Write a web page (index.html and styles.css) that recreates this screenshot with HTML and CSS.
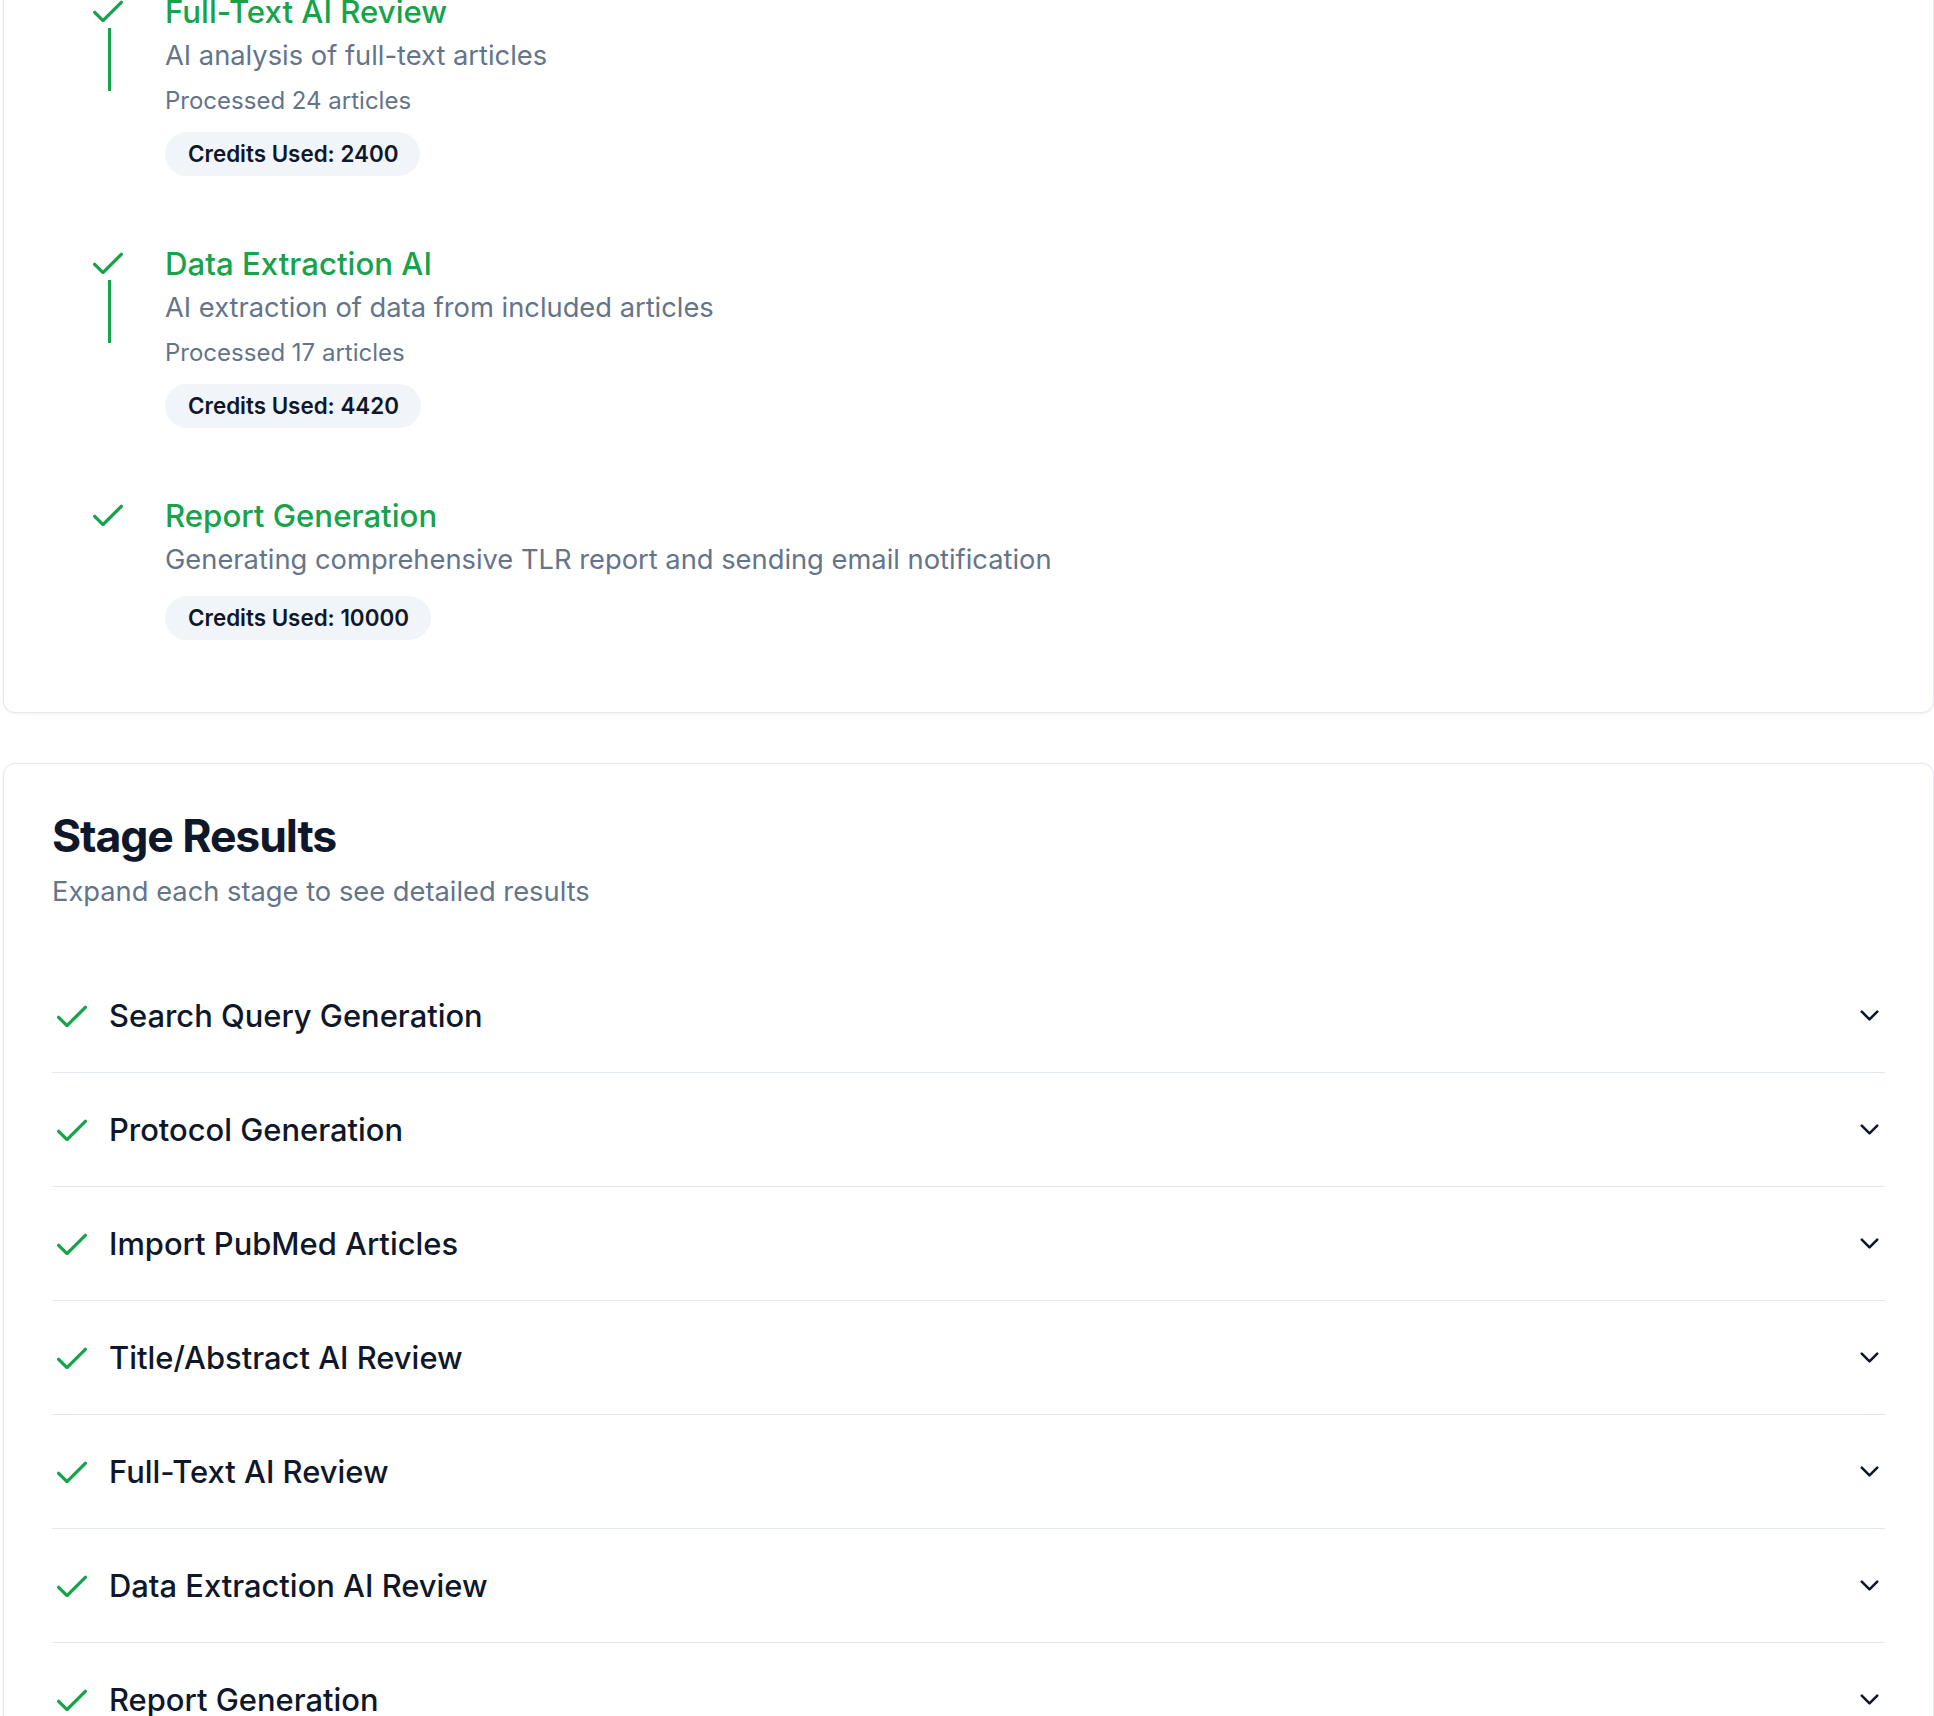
FILE: index.html
```html
<!DOCTYPE html>
<html>
<head>
  <title>Review Progress</title>
  <link rel="stylesheet" href="styles.css">
</head>
<body>
  <main class="page">
    <section class="card timeline-card">
      <div class="stage">
        <div class="stage-marker">
          <svg class="check" viewBox="3 4.6 18 13.2"><path d="M20 6 9 17l-5-5"/></svg>
          <span class="stage-line"></span>
        </div>
        <div class="stage-body">
          <h3 class="stage-title">Full-Text AI Review</h3>
          <p class="stage-desc">AI analysis of full-text articles</p>
          <p class="stage-meta">Processed 24 articles</p>
          <span class="credits">Credits Used: 2400</span>
        </div>
      </div>
      <div class="stage">
        <div class="stage-marker">
          <svg class="check" viewBox="3 4.6 18 13.2"><path d="M20 6 9 17l-5-5"/></svg>
          <span class="stage-line"></span>
        </div>
        <div class="stage-body">
          <h3 class="stage-title">Data Extraction AI</h3>
          <p class="stage-desc">AI extraction of data from included articles</p>
          <p class="stage-meta">Processed 17 articles</p>
          <span class="credits">Credits Used: 4420</span>
        </div>
      </div>
      <div class="stage">
        <div class="stage-marker">
          <svg class="check" viewBox="3 4.6 18 13.2"><path d="M20 6 9 17l-5-5"/></svg>
        </div>
        <div class="stage-body">
          <h3 class="stage-title">Report Generation</h3>
          <p class="stage-desc">Generating comprehensive TLR report and sending email notification</p>
          <span class="credits">Credits Used: 10000</span>
        </div>
      </div>
    </section>

    <section class="card results-card">
      <h2>Stage Results</h2>
      <p class="subtitle">Expand each stage to see detailed results</p>
      <ul class="results">
        <li class="result-row">
          <svg class="check" viewBox="3 4.6 18 13.2"><path d="M20 6 9 17l-5-5"/></svg>
          <span class="result-name">Search Query Generation</span>
          <svg class="chevron" viewBox="0 0 24 24"><path d="m6 9 6 6 6-6"/></svg>
        </li>
        <li class="result-row">
          <svg class="check" viewBox="3 4.6 18 13.2"><path d="M20 6 9 17l-5-5"/></svg>
          <span class="result-name">Protocol Generation</span>
          <svg class="chevron" viewBox="0 0 24 24"><path d="m6 9 6 6 6-6"/></svg>
        </li>
        <li class="result-row">
          <svg class="check" viewBox="3 4.6 18 13.2"><path d="M20 6 9 17l-5-5"/></svg>
          <span class="result-name">Import PubMed Articles</span>
          <svg class="chevron" viewBox="0 0 24 24"><path d="m6 9 6 6 6-6"/></svg>
        </li>
        <li class="result-row">
          <svg class="check" viewBox="3 4.6 18 13.2"><path d="M20 6 9 17l-5-5"/></svg>
          <span class="result-name">Title/Abstract AI Review</span>
          <svg class="chevron" viewBox="0 0 24 24"><path d="m6 9 6 6 6-6"/></svg>
        </li>
        <li class="result-row">
          <svg class="check" viewBox="3 4.6 18 13.2"><path d="M20 6 9 17l-5-5"/></svg>
          <span class="result-name">Full-Text AI Review</span>
          <svg class="chevron" viewBox="0 0 24 24"><path d="m6 9 6 6 6-6"/></svg>
        </li>
        <li class="result-row">
          <svg class="check" viewBox="3 4.6 18 13.2"><path d="M20 6 9 17l-5-5"/></svg>
          <span class="result-name">Data Extraction AI Review</span>
          <svg class="chevron" viewBox="0 0 24 24"><path d="m6 9 6 6 6-6"/></svg>
        </li>
        <li class="result-row">
          <svg class="check" viewBox="3 4.6 18 13.2"><path d="M20 6 9 17l-5-5"/></svg>
          <span class="result-name">Report Generation</span>
          <svg class="chevron" viewBox="0 0 24 24"><path d="m6 9 6 6 6-6"/></svg>
        </li>
      </ul>
    </section>
  </main>
</body>
</html>
```

FILE: styles.css
```css
:root {
  --green: #16a34a;
  --text-dark: #0f172a;
  --text-muted: #64748b;
  --border: #e2e8f0;
  --badge-bg: #f1f5f9;
}

* {
  margin: 0;
  padding: 0;
  box-sizing: border-box;
}

html,
body {
  overflow: hidden;
}

body {
  font-family: 'Inter', 'Noto Sans', sans-serif;
  background: #ffffff;
  color: var(--text-dark);
}

/* page is scrolled down a bit, so the first card starts above the fold */
.page {
  margin-top: -59px;
  padding-left: 3px;
}

.card {
  background: #ffffff;
  border: 1px solid var(--border);
  border-radius: 12px;
  box-shadow: 0 1px 3px rgba(15, 23, 42, 0.06);
  padding: 48px;
}

.timeline-card {
  padding-bottom: 72px;
}

.results-card {
  margin-top: 50px;
}

/* check icon (shared) */
.check {
  display: block;
  flex-shrink: 0;
  width: 30px;
  height: 22px;
  fill: none;
  stroke: var(--green);
  stroke-width: 2;
  stroke-linecap: round;
  stroke-linejoin: round;
}

/* timeline */
.stage {
  display: flex;
  gap: 42px;
  padding-left: 41px;
}

.stage + .stage {
  margin-top: 66px;
}

.stage-marker {
  display: flex;
  flex-direction: column;
  width: 30px;
}

.stage-marker .check {
  margin-top: 10px;
}

.stage-line {
  display: block;
  width: 3px;
  height: 63px;
  margin-top: 6px;
  margin-left: 15px;
  background: var(--green);
}

.stage-title {
  font-size: 31.2px;
  line-height: 44px;
  font-weight: 500;
  color: var(--green);
}

.stage-desc {
  margin-top: 1px;
  font-size: 27.3px;
  line-height: 42px;
  color: var(--text-muted);
}

.stage-meta {
  margin-top: 8px;
  font-size: 24px;
  line-height: 32px;
  color: var(--text-muted);
}

.credits {
  display: inline-block;
  margin-top: 15px;
  padding: 6px 22px 6px 23px;
  border-radius: 999px;
  background: var(--badge-bg);
  font-size: 22.4px;
  line-height: 32px;
  font-weight: 600;
  color: var(--text-dark);
}

/* stage results */
.results-card h2 {
  font-size: 44.6px;
  line-height: 49px;
  font-weight: 700;
  letter-spacing: -0.025em;
  color: var(--text-dark);
}

.subtitle {
  margin-top: 12px;
  font-size: 27.3px;
  line-height: 38px;
  color: var(--text-muted);
}

.results {
  list-style: none;
  margin-top: 48px;
}

.result-row {
  display: flex;
  align-items: center;
  padding: 36px 0;
  border-bottom: 1px solid var(--border);
}

.result-row .check {
  margin-left: 5px;
}

.result-name {
  flex: 1;
  margin-left: 22px;
  font-size: 30.9px;
  line-height: 41px;
  font-weight: 500;
  color: var(--text-dark);
}

.chevron {
  width: 31px;
  height: 31px;
  fill: none;
  stroke: var(--text-dark);
  stroke-width: 2;
  stroke-linecap: round;
  stroke-linejoin: round;
}
```
